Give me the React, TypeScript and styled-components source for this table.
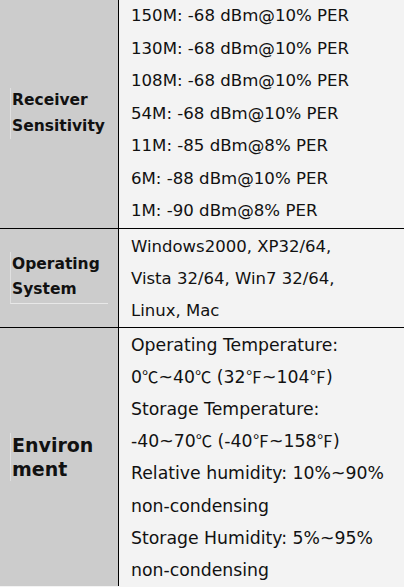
import React, { FunctionComponent } from 'react';
import styled, { createGlobalStyle } from 'styled-components';

const receiver = [
  '150M: -68 dBm@10% PER',
  '130M: -68 dBm@10% PER',
  '108M: -68 dBm@10% PER',
  '54M: -68 dBm@10% PER',
  '11M: -85 dBm@8% PER',
  '6M: -88 dBm@10% PER',
  '1M: -90 dBm@8% PER',
];

const systems = ['Windows2000, XP32/64,', 'Vista 32/64, Win7 32/64,', 'Linux, Mac'];

const App: FunctionComponent = () => (
  <>
    <GlobalStyle />
    <Table>
      <Label>
        <LabelText>
          Receiver
          <br />
          Sensitivity
        </LabelText>
      </Label>
      <Value lineHeight={32.5} pad={0} size={16.6}>
        {receiver.map((line) => (
          <Line key={line}>{line}</Line>
        ))}
      </Value>

      <Label>
        <LabelText underline>
          Operating
          <br />
          System
        </LabelText>
      </Label>
      <Value lineHeight={32} pad={2} size={16.5}>
        {systems.map((line) => (
          <Line key={line}>{line}</Line>
        ))}
      </Value>

      <Label last>
        <LabelText big>
          Environ
          <br />
          ment
        </LabelText>
      </Label>
      <Value lineHeight={32.2} pad={1} size={17.3} last>
        <Line>Operating Temperature:</Line>
        <Line>
          0<Deg>℃</Deg>~40<Deg>℃</Deg> (32<Deg>℉</Deg>~104<Deg>℉</Deg>)
        </Line>
        <Line>Storage Temperature:</Line>
        <Line>
          -40~70<Deg>℃</Deg> (-40<Deg>℉</Deg>~158<Deg>℉</Deg>)
        </Line>
        <Line>Relative humidity: 10%~90%</Line>
        <Line>non-condensing</Line>
        <Line>Storage Humidity: 5%~95%</Line>
        <Line>non-condensing</Line>
      </Value>
    </Table>
  </>
);

const GlobalStyle = createGlobalStyle`
  html, body {
    margin: 0;
    padding: 0;
    background: #f3f3f3;
  }
`;

const Table = styled.div`
  display: grid;
  grid-template-columns: 119px 1fr;
  width: 404px;
  color: #111;
`;

const Label = styled.div<{ last?: boolean }>`
  display: flex;
  align-items: center;
  background: #cccccc;
  border-right: 1px solid #000;
  border-bottom: ${(p) => (p.last ? 'none' : '1px solid #000')};
  padding-left: 10px;
`;

const LabelText = styled.div<{ big?: boolean; underline?: boolean }>`
  font-family: 'DejaVu Sans', sans-serif;
  font-weight: bold;
  font-size: ${(p) => (p.big ? '19px' : '15.5px')};
  line-height: ${(p) => (p.big ? '24px' : '25.5px')};
  border-left: 1px solid #e0e0e0;
  padding-left: 1px;
  padding-right: 8px;
  border-bottom: ${(p) => (p.underline ? '1px solid #e8e8e8' : 'none')};
`;

const Value = styled.div<{ lineHeight: number; pad: number; size: number; last?: boolean }>`
  background: #f3f3f3;
  border-bottom: ${(p) => (p.last ? 'none' : '1px solid #000')};
  padding: ${(p) => p.pad}px 0 0 12px;
  font-family: 'DejaVu Sans', sans-serif;
  font-size: ${(p) => p.size}px;
  line-height: ${(p) => p.lineHeight}px;
`;

const Line = styled.div`
  white-space: nowrap;
`;

const Deg = styled.span`
  font-family: 'Noto Sans CJK SC', sans-serif;
  font-size: 0.95em;
  line-height: 1;
`;

export default App;
